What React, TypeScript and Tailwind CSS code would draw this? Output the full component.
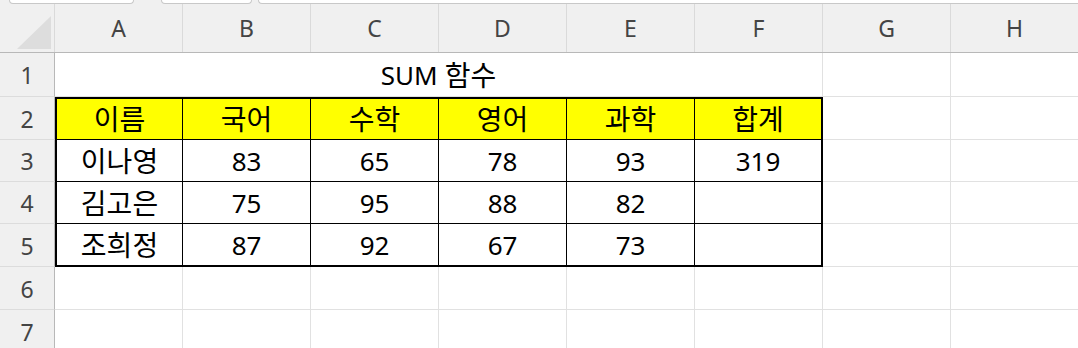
const COLS = ['A', 'B', 'C', 'D', 'E', 'F', 'G', 'H'];
const HEADS = ['이름', '국어', '수학', '영어', '과학', '합계'];
const ROWS = [
  ['이나영', '83', '65', '78', '93', '319'],
  ['김고은', '75', '95', '88', '82', ''],
  ['조희정', '87', '92', '67', '73', ''],
];

const font = "font-['Noto_Sans','Noto_Sans_CJK_KR',sans-serif]";
const isHangul = (s: string) => /[가-힣]/.test(s);

function RowHead({ n }: { n: number }) {
  return (
    <div className="flex items-center justify-center border-r border-b border-r-[#b8b8b8] border-b-[#dcdcdc] bg-[#f0f0f0] pt-[2px] text-[23px] leading-none text-[#444]">
      {n}
    </div>
  );
}

function Blank() {
  return <div className="border-r border-b border-[#e1e1e1]" />;
}

// A2:F5 with a thick outline and thin inner lines
function ScoreTable() {
  const all = [HEADS, ...ROWS];
  return (
    <div className="col-span-6 row-span-4 grid grid-cols-[126px_repeat(4,128px)_126px] grid-rows-[41px_42px_42px_41px] border-2 border-black">
      {all.map((row, r) =>
        row.map((v, c) => (
          <div
            key={`${r}-${c}`}
            className={`flex items-center justify-center leading-none text-black ${
              isHangul(v) ? 'text-[28px]' : 'pt-[1px] text-[26px]'
            } ${r === 0 ? 'bg-[#ffff00]' : 'bg-white'} ${c < 5 ? 'border-r border-r-black' : ''} ${
              r < 3 ? 'border-b border-b-black' : ''
            }`}
          >
            {v}
          </div>
        ))
      )}
    </div>
  );
}

export default function App() {
  return (
    <div className={`h-[348px] w-[1078px] overflow-hidden bg-white ${font}`}>
      {/* sheet tabs peeking in at the top */}
      <div className="flex h-[4px] bg-[#f0f0f0]">
        <div className="ml-[9px] w-[125px] rounded-b-[4px] border border-t-0 border-[#c8c8c8] bg-white" />
        <div className="ml-[27px] w-[91px] rounded-b-[4px] border border-t-0 border-[#c8c8c8] bg-white" />
        <div className="ml-[6px] flex-1 rounded-bl-[4px] border border-t-0 border-r-0 border-[#c8c8c8] bg-white" />
      </div>

      {/* column headers */}
      <div className="flex h-[49px] border-b border-[#b8b8b8] bg-[#f0f0f0]">
        <div className="w-[55px] shrink-0 border-r border-[#dadada]">
          <svg width="54" height="48" viewBox="0 0 54 48">
            <polygon points="17,45 51,45 51,12" fill="#dddddd" />
          </svg>
        </div>
        {COLS.map((c) => (
          <div
            key={c}
            className="flex w-[128px] shrink-0 items-center justify-center border-r border-[#dadada] text-[23px] leading-none text-[#444]"
          >
            {c}
          </div>
        ))}
      </div>

      <div className="grid grid-cols-[55px_repeat(8,128px)] grid-rows-[44px_43px_42px_42px_43px_43px_43px]">
        <RowHead n={1} />
        <div className="col-span-6 flex items-center justify-center border-r border-b border-[#e1e1e1] pt-[1px] text-[26px] leading-none text-black">
          SUM <span className="ml-[7px] text-[28px]">함수</span>
        </div>
        <Blank />
        <Blank />

        <RowHead n={2} />
        <ScoreTable />
        <Blank />
        <Blank />

        {[3, 4, 5].map((n) => (
          <div key={n} className="contents">
            <RowHead n={n} />
            <Blank />
            <Blank />
          </div>
        ))}

        {[6, 7].map((n) => (
          <div key={n} className="contents">
            <RowHead n={n} />
            {COLS.map((c) => (
              <Blank key={c} />
            ))}
          </div>
        ))}
      </div>
    </div>
  );
}
